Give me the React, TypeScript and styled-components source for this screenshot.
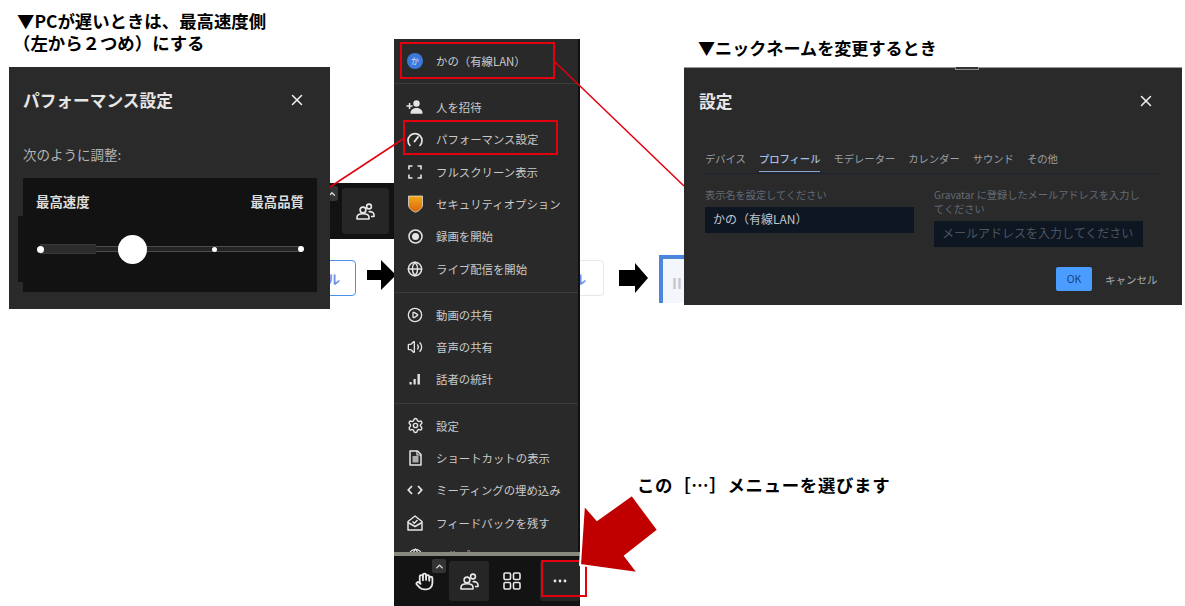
import styled, { createGlobalStyle } from 'styled-components'
import { ChevronUp, Globe, Hand, PlayCircle, Settings, Volume2, X } from 'lucide-react'

const GlobalStyle = createGlobalStyle`
  html, body {
    margin: 0;
    padding: 0;
    background: #fff;
    font-family: "Noto Sans CJK JP", "Liberation Sans", sans-serif;
  }
`

const Canvas = styled.div`
  position: relative;
  width: 1185px;
  height: 606px;
  overflow: hidden;
  background: #fff;
`

// annotation headings
const Heading = styled.div<{ $x: number; $y: number; $size?: number; $spacing?: number; $indent?: number }>`
  position: absolute;
  left: ${(p) => p.$x}px;
  top: ${(p) => p.$y}px;
  font-size: ${(p) => p.$size ?? 17.4}px;
  font-weight: 700;
  line-height: 22px;
  color: #000;
  white-space: pre;
  letter-spacing: ${(p) => p.$spacing ?? 0}px;
  text-indent: ${(p) => p.$indent ?? 0}px;
`

// pieces of the toolbar strip behind the panels
const BackToolbar = styled.div`
  position: absolute;
  left: 325px;
  top: 183px;
  width: 69px;
  height: 56px;
  background: #121212;
  display: flex;
  align-items: center;
  justify-content: flex-end;
  padding-right: 5px;
  box-sizing: border-box;
`

const BackToolButton = styled.div`
  width: 47px;
  height: 46px;
  border-radius: 3px;
  background: #262626;
  color: #e8e8e8;
  display: flex;
  align-items: center;
  justify-content: center;
`

const BackCaret = styled.div`
  position: absolute;
  left: 325px;
  top: 186px;
  width: 13px;
  height: 15px;
  border-radius: 3px;
  background: #353535;
  color: #ddd;
  display: flex;
  align-items: center;
  justify-content: center;
`

const GhostButton = styled.div<{ $x: number; $w: number; $light?: boolean }>`
  position: absolute;
  left: ${(p) => p.$x}px;
  top: 260px;
  width: ${(p) => p.$w}px;
  height: 36px;
  box-sizing: border-box;
  border: ${(p) => (p.$light ? '1.5px solid #e4e7ec' : '1.5px solid #4a90e8')};
  border-radius: 4px;
  font-size: 13px;
  font-weight: 700;
  color: #6f8fe8;
  display: flex;
  align-items: center;
  justify-content: flex-end;
  padding-right: ${(p) => (p.$light ? 17 : 15)}px;
`

const BlockArrow = styled.svg<{ $x: number; $y: number }>`
  position: absolute;
  left: ${(p) => p.$x}px;
  top: ${(p) => p.$y}px;
`

const PausedButton = styled.div`
  position: absolute;
  left: 659px;
  top: 255px;
  width: 40px;
  height: 48px;
  box-sizing: border-box;
  border: 4px solid #4a86dc;
  border-bottom: none;
  background: #f3f6fb;
  padding: 15px 0 0 9px;
  color: #c4c8cc;
  font-size: 15px;
  font-weight: 700;
  line-height: 18px;
`

// dark dialogs
const LeftDialog = styled.section`
  position: absolute;
  left: 9px;
  top: 67px;
  width: 321px;
  height: 242px;
  box-sizing: border-box;
  padding: 0 13px 0 14px;
  background: #2a2a2a;
  color: #e8e8e8;
  display: flex;
  flex-direction: column;
`

const DialogHeader = styled.header`
  height: 65px;
  display: flex;
  align-items: center;
  justify-content: space-between;
  flex-shrink: 0;
`

const DialogTitle = styled.h2`
  margin: 0;
  font-size: 16.7px;
  font-weight: 700;
  color: #e6e6e6;
`

const CloseIcon = styled(X)<{ $right: number }>`
  color: #f0f0f0;
  margin-right: ${(p) => p.$right}px;
`

const AdjustLabel = styled.p`
  margin: 12px 0 14px;
  font-size: 13.5px;
  line-height: 20px;
  color: #b4b4b4;
`

const SpeedBox = styled.div`
  position: relative;
  height: 114px;
  background: #121212;
  padding: 13px 13px 0;
  box-sizing: border-box;
  &::before {
    content: '';
    position: absolute;
    left: -5px;
    top: 38px;
    width: 5px;
    height: 66px;
    background: #121212;
  }
`

const SpeedLabels = styled.div`
  display: flex;
  justify-content: space-between;
  font-size: 13.4px;
  line-height: 20px;
  font-weight: 700;
  color: #dcdcdc;
`

const SliderTrack = styled.div`
  position: relative;
  margin: 35px 0 0 4px;
  width: 261px;
  height: 6px;
  background: #242424;
  border-top: 1px solid #4c4c4c;
  border-bottom: 1px solid #4c4c4c;
  box-sizing: border-box;
`

const SliderThick = styled.div`
  position: absolute;
  left: 0;
  top: -3px;
  width: 56px;
  height: 10px;
  background: #2c2c2c;
  border-top: 1px solid #3a3a3a;
  border-bottom: 1px solid #3a3a3a;
  box-sizing: border-box;
`

const SliderDot = styled.span<{ $size: number }>`
  position: absolute;
  top: 50%;
  width: ${(p) => p.$size}px;
  height: ${(p) => p.$size}px;
  margin-left: ${(p) => -p.$size / 2}px;
  margin-top: ${(p) => -p.$size / 2}px;
  border-radius: 50%;
  background: #fff;
`

const RightDialog = styled.section`
  position: absolute;
  left: 684px;
  top: 67px;
  width: 498px;
  height: 238px;
  box-sizing: border-box;
  padding: 0 25px 0 15px;
  background: #2a2a2a;
  border-top: 1px solid #9a9a9a;
  display: flex;
  flex-direction: column;
`

const TopNotch = styled.div`
  position: absolute;
  left: 271px;
  top: -1px;
  width: 24px;
  height: 3px;
  box-sizing: border-box;
  border: 1px solid #8c8c8c;
  border-top: none;
  background: #333;
`

const Tabs = styled.nav`
  margin: 13px 0 0 6px;
  height: 27px;
  width: 455px;
  border-bottom: 1px solid #1b2433;
  display: flex;
  gap: 13px;
  flex-shrink: 0;
`

const Tab = styled.div<{ $active?: boolean }>`
  height: 26px;
  box-sizing: border-box;
  font-size: 10.3px;
  line-height: 26px;
  white-space: nowrap;
  color: ${(p) => (p.$active ? '#a9bfe0' : '#9aa0a8')};
  font-weight: ${(p) => (p.$active ? 500 : 400)};
  border-bottom: ${(p) => (p.$active ? '1.5px solid #8aa6d0' : 'none')};
`

const FormRow = styled.div`
  margin: 14px 0 0 6px;
  display: grid;
  grid-template-columns: 209px 209px;
  column-gap: 20px;
`

const FieldLabel = styled.label`
  display: block;
  font-size: 10.2px;
  line-height: 14px;
  color: #626a76;
`

const FieldBox = styled.div<{ $placeholder?: boolean }>`
  height: 26px;
  margin-top: 5px;
  padding-left: 8px;
  box-sizing: border-box;
  background: #0e1622;
  font-size: 12px;
  line-height: 24px;
  white-space: nowrap;
  color: ${(p) => (p.$placeholder ? '#4c5460' : '#c0c6ce')};
`

const DialogActions = styled.div`
  margin: auto 0 14px;
  display: flex;
  justify-content: flex-end;
  align-items: center;
  gap: 13px;
`

const OkButton = styled.div`
  width: 36px;
  height: 24px;
  border-radius: 2px;
  background: #4a9cff;
  color: #14457c;
  font-size: 10.5px;
  line-height: 24px;
  text-align: center;
`

const CancelText = styled.span`
  font-size: 10.5px;
  color: #a4acb4;
  width: 52px;
  white-space: nowrap;
`

// centre menu column
const MenuColumn = styled.div`
  position: absolute;
  left: 394px;
  top: 39px;
  width: 186px;
  height: 567px;
  background: #858a7c;
  display: flex;
  flex-direction: column;
`

const Menu = styled.div`
  height: 513px;
  flex-shrink: 0;
  box-sizing: border-box;
  overflow: hidden;
  background: #292929;
  border-right: 2px solid #111;
`

const MenuSection = styled.div<{ $top: number; $bottom: number; $line?: boolean }>`
  padding: ${(p) => p.$top}px 0 ${(p) => p.$bottom}px;
  border-bottom: ${(p) => (p.$line ? '1px solid #3c3c3c' : 'none')};
`

const MenuRow = styled.div<{ $h?: number }>`
  height: ${(p) => p.$h ?? 32.4}px;
  padding-left: 12px;
  display: flex;
  align-items: center;
  gap: 12px;
  font-size: 11.4px;
  white-space: nowrap;
  color: #c9c9c9;
`

const MenuIcon = styled.span`
  width: 18px;
  height: 18px;
  flex-shrink: 0;
  display: flex;
  align-items: center;
  justify-content: center;
  color: #e4e4e4;
`

const Avatar = styled.span`
  width: 16px;
  height: 16px;
  border-radius: 50%;
  background: #3b78dc;
  color: #dfe9fb;
  font-size: 8px;
  line-height: 16px;
  text-align: center;
`

const BottomBar = styled.div`
  margin-top: 4px;
  height: 50px;
  padding-left: 10px;
  background: #131313;
  display: flex;
  align-items: center;
`

const ToolSlot = styled.div<{ $on?: boolean; $gap?: number }>`
  position: relative;
  width: 40px;
  height: 40px;
  margin-left: ${(p) => p.$gap ?? 0}px;
  border-radius: 3px;
  background: ${(p) => (p.$on ? '#262626' : 'transparent')};
  color: #e8e8e8;
  display: flex;
  align-items: center;
  justify-content: center;
`

const ToolCaret = styled.span`
  position: absolute;
  left: 28px;
  top: -2px;
  width: 14px;
  height: 14px;
  border-radius: 2px;
  background: #333;
  color: #ddd;
  display: flex;
  align-items: center;
  justify-content: center;
`

// red annotations on top of the shots
const RedBox = styled.div<{ $x: number; $y: number; $w: number; $h: number }>`
  position: absolute;
  left: ${(p) => p.$x}px;
  top: ${(p) => p.$y}px;
  width: ${(p) => p.$w}px;
  height: ${(p) => p.$h}px;
  box-sizing: border-box;
  border: 2px solid #e3000f;
`

const Overlay = styled.svg`
  position: absolute;
  left: 0;
  top: 0;
  pointer-events: none;
`

const UserPlusIcon = () => (
  <svg width="18" height="14" viewBox="0 0 18 14" fill="currentColor">
    <circle cx="10.5" cy="3.5" r="3.2" />
    <path d="M4.5 13c0-3.300 3-5 6-5s6 1.700 6 5v.8h-12z" />
    <path d="M0.500 5.200h2.300v-2.300h1.500v2.300h2.300v1.500h-2.300v2.300h-1.500v-2.300h-2.300z" />
  </svg>
)

const GaugeIcon = () => (
  <svg width="16" height="15" viewBox="0 0 16 15" fill="none" stroke="currentColor" strokeWidth="1.700">
    <path d="M3 13.500A7 7 0 1 1 13 13.500" strokeLinecap="round" />
    <path d="M7.500 9.500L11 5" strokeWidth="2" strokeLinecap="round" />
  </svg>
)

const FullscreenIcon = () => (
  <svg width="14" height="14" viewBox="0 0 14 14" fill="none" stroke="currentColor" strokeWidth="1.600">
    <path d="M1 4.500V1h3.500M9.500 1H13v3.500M13 9.500V13H9.500M4.500 13H1V9.500" />
  </svg>
)

const ShieldIcon = () => (
  <svg width="15" height="18" viewBox="0 0 15 18">
    <defs>
      <linearGradient id="shield" x1="0" y1="0" x2="0" y2="1">
        <stop offset="0" stopColor="#f2a81a" />
        <stop offset="1" stopColor="#d9660a" />
      </linearGradient>
    </defs>
    <path d="M0.500 1h14v9c0 3.200-3.200 5.700-7 7.300-3.800-1.600-7-4.100-7-7.300z" fill="url(#shield)" stroke="#ececec" strokeWidth="0.700" />
  </svg>
)

const RecordIcon = () => (
  <svg width="15" height="15" viewBox="0 0 15 15">
    <circle cx="7.500" cy="7.500" r="6.500" fill="none" stroke="currentColor" strokeWidth="1.500" />
    <circle cx="7.500" cy="7.500" r="3.500" fill="currentColor" />
  </svg>
)

const BarsIcon = () => (
  <svg width="12" height="12" viewBox="0 0 12 12" fill="currentColor">
    <rect x="0.500" y="9" width="2.200" height="2.500" />
    <rect x="4.500" y="6" width="2.200" height="5.500" />
    <rect x="8.500" y="1" width="2.400" height="10.500" />
  </svg>
)

const DocIcon = () => (
  <svg width="13" height="16" viewBox="0 0 13 16">
    <path d="M1 1h7.500L12 4.500V15H1z" fill="none" stroke="currentColor" strokeWidth="1.500" strokeLinejoin="round" />
    <path d="M3.500 6h6v6.500h-6z" fill="currentColor" opacity="0.700" />
    <path d="M8 1v4h4" fill="none" stroke="currentColor" strokeWidth="1.200" />
  </svg>
)

const CodeIcon = () => (
  <svg width="16" height="10" viewBox="0 0 16 10" fill="none" stroke="currentColor" strokeWidth="1.800">
    <path d="M5 1L1.300 5 5 9M11 1l3.700 4L11 9" />
  </svg>
)

const FeedbackIcon = () => (
  <svg width="16" height="16" viewBox="0 0 16 16" fill="none" stroke="currentColor" strokeWidth="1.500" strokeLinejoin="round">
    <path d="M1 6.500L8 1l7 5.500V15H1z" />
    <path d="M1 7.500L8 11.500l7-4" />
    <path d="M5.500 6.500L7.300 8.200 10.500 5" strokeWidth="1.400" />
  </svg>
)

const UsersIcon = () => (
  <svg width="19" height="17" viewBox="0 0 19 17" fill="none" stroke="currentColor" strokeWidth="1.600" strokeLinejoin="round">
    <circle cx="7" cy="7" r="2.900" />
    <path d="M1 16v-1.800c0-2.200 2.600-3.500 6-3.500s6 1.300 6 3.500V16z" />
    <circle cx="13" cy="3.500" r="2.400" />
    <path d="M12.600 8.800c2.900-.6 5.400.6 5.400 3v1.700h-3" />
  </svg>
)

const GridIcon = () => (
  <svg width="18" height="18" viewBox="0 0 18 18" fill="none" stroke="currentColor" strokeWidth="1.600">
    <rect x="1" y="1" width="6.500" height="6.500" rx="1.300" />
    <rect x="10.500" y="1" width="6.500" height="6.500" rx="1.300" />
    <rect x="1" y="10.500" width="6.500" height="6.500" rx="1.300" />
    <rect x="10.500" y="10.500" width="6.500" height="6.500" rx="1.300" />
  </svg>
)

const DotsIcon = () => (
  <svg width="14" height="4" viewBox="0 0 14 4" fill="currentColor">
    <circle cx="2" cy="2" r="1.400" />
    <circle cx="7" cy="2" r="1.400" />
    <circle cx="12" cy="2" r="1.400" />
  </svg>
)

const App = () => {
  return (
    <Canvas>
      <GlobalStyle />
      <Heading $x={13} $y={10} $indent={4}>{'▼PCが遅いときは、最高速度側\n（左から２つめ）にする'}</Heading>
      <Heading $x={698} $y={37} $size={17.1}>{'▼ニックネームを変更するとき'}</Heading>
      <Heading $x={637} $y={474} $spacing={0.700}>{'この［…］メニューを選びます'}</Heading>

      <BackToolbar>
        <BackToolButton>
          <UsersIcon />
        </BackToolButton>
      </BackToolbar>
      <BackCaret>
        <ChevronUp size={10} strokeWidth={3} />
      </BackCaret>
      <GhostButton $x={290} $w={66}>ル</GhostButton>
      <GhostButton $x={540} $w={64} $light>ル</GhostButton>
      <BlockArrow $x={367} $y={260} width={30} height={30} viewBox="0 0 30 30">
        <path d="M0 10h14V0l15 15-15 15V20H0z" fill="#000" />
      </BlockArrow>
      <BlockArrow $x={619} $y={263} width={30} height={30} viewBox="0 0 30 30">
        <path d="M0 7h16V0l13 15-13 15v-7H0z" fill="#000" />
      </BlockArrow>
      <PausedButton>II</PausedButton>

      <LeftDialog>
        <DialogHeader>
          <DialogTitle>パフォーマンス設定</DialogTitle>
          <CloseIcon size={18} strokeWidth={2} $right={11} />
        </DialogHeader>
        <AdjustLabel>次のように調整:</AdjustLabel>
        <SpeedBox>
          <SpeedLabels>
            <span>最高速度</span>
            <span>最高品質</span>
          </SpeedLabels>
          <SliderTrack>
            <SliderThick />
            <SliderDot $size={7} style={{ left: '0%' }} />
            <SliderDot $size={29} style={{ left: '35.500%' }} />
            <SliderDot $size={5} style={{ left: '66.700%' }} />
            <SliderDot $size={6} style={{ left: '100%' }} />
          </SliderTrack>
        </SpeedBox>
      </LeftDialog>

      <MenuColumn>
        <Menu>
          <MenuSection $top={0} $bottom={0} $line>
            <MenuRow $h={44}>
              <MenuIcon>
                <Avatar>か</Avatar>
              </MenuIcon>
              <span>かの（有線LAN）</span>
            </MenuRow>
          </MenuSection>
          <MenuSection $top={6.600} $bottom={7.400} $line>
            <MenuRow>
              <MenuIcon><UserPlusIcon /></MenuIcon>
              人を招待
            </MenuRow>
            <MenuRow>
              <MenuIcon><GaugeIcon /></MenuIcon>
              パフォーマンス設定
            </MenuRow>
            <MenuRow>
              <MenuIcon><FullscreenIcon /></MenuIcon>
              フルスクリーン表示
            </MenuRow>
            <MenuRow>
              <MenuIcon><ShieldIcon /></MenuIcon>
              セキュリティオプション
            </MenuRow>
            <MenuRow>
              <MenuIcon><RecordIcon /></MenuIcon>
              録画を開始
            </MenuRow>
            <MenuRow>
              <MenuIcon><Globe size={16} strokeWidth={2.200} /></MenuIcon>
              ライブ配信を開始
            </MenuRow>
          </MenuSection>
          <MenuSection $top={5} $bottom={7} $line>
            <MenuRow>
              <MenuIcon><PlayCircle size={16} strokeWidth={2} /></MenuIcon>
              動画の共有
            </MenuRow>
            <MenuRow>
              <MenuIcon><Volume2 size={16} strokeWidth={2} /></MenuIcon>
              音声の共有
            </MenuRow>
            <MenuRow>
              <MenuIcon><BarsIcon /></MenuIcon>
              話者の統計
            </MenuRow>
          </MenuSection>
          <MenuSection $top={6} $bottom={0}>
            <MenuRow>
              <MenuIcon><Settings size={17} strokeWidth={2} /></MenuIcon>
              設定
            </MenuRow>
            <MenuRow>
              <MenuIcon><DocIcon /></MenuIcon>
              ショートカットの表示
            </MenuRow>
            <MenuRow>
              <MenuIcon><CodeIcon /></MenuIcon>
              ミーティングの埋め込み
            </MenuRow>
            <MenuRow>
              <MenuIcon><FeedbackIcon /></MenuIcon>
              フィードバックを残す
            </MenuRow>
            <MenuRow>
              <MenuIcon><Globe size={15} /></MenuIcon>
              ヘルプ
            </MenuRow>
          </MenuSection>
        </Menu>
        <BottomBar>
          <ToolSlot>
            <Hand size={19} strokeWidth={2.300} />
            <ToolCaret><ChevronUp size={11} strokeWidth={3} /></ToolCaret>
          </ToolSlot>
          <ToolSlot $on $gap={5}><UsersIcon /></ToolSlot>
          <ToolSlot $gap={3}><GridIcon /></ToolSlot>
          <ToolSlot $on $gap={8}><DotsIcon /></ToolSlot>
        </BottomBar>
      </MenuColumn>

      <RightDialog>
        <TopNotch />
        <DialogHeader>
          <DialogTitle>設定</DialogTitle>
          <CloseIcon size={18} strokeWidth={2} $right={2} />
        </DialogHeader>
        <Tabs>
          <Tab>デバイス</Tab>
          <Tab $active>プロフィール</Tab>
          <Tab>モデレーター</Tab>
          <Tab>カレンダー</Tab>
          <Tab>サウンド</Tab>
          <Tab>その他</Tab>
        </Tabs>
        <FormRow>
          <div>
            <FieldLabel>表示名を設定してください</FieldLabel>
            <FieldBox>かの（有線LAN）</FieldBox>
          </div>
          <div>
            <FieldLabel>Gravatar に登録したメールアドレスを入力してください</FieldLabel>
            <FieldBox $placeholder>メールアドレスを入力してください</FieldBox>
          </div>
        </FormRow>
        <DialogActions>
          <OkButton>OK</OkButton>
          <CancelText>キャンセル</CancelText>
        </DialogActions>
      </RightDialog>

      <Overlay width={1185} height={606}>
        <line x1="330" y1="187" x2="403" y2="139" stroke="#e3000f" strokeWidth="1.500" />
        <line x1="555" y1="62" x2="684" y2="186" stroke="#e3000f" strokeWidth="1.500" />
      </Overlay>
      <RedBox $x={400} $y={42} $w={155} $h={37} />
      <RedBox $x={403} $y={120} $w={155} $h={35} />
      <RedBox $x={541} $y={560} $w={46} $h={37} />
      <Overlay width={1185} height={606}>
        <polygon
          points="632,495 658,530 625,556 638,573 580,565 584,505 597,520"
          fill="#c00000"
          stroke="#fff"
          strokeWidth="2"
        />
      </Overlay>
    </Canvas>
  )
}

export default App
